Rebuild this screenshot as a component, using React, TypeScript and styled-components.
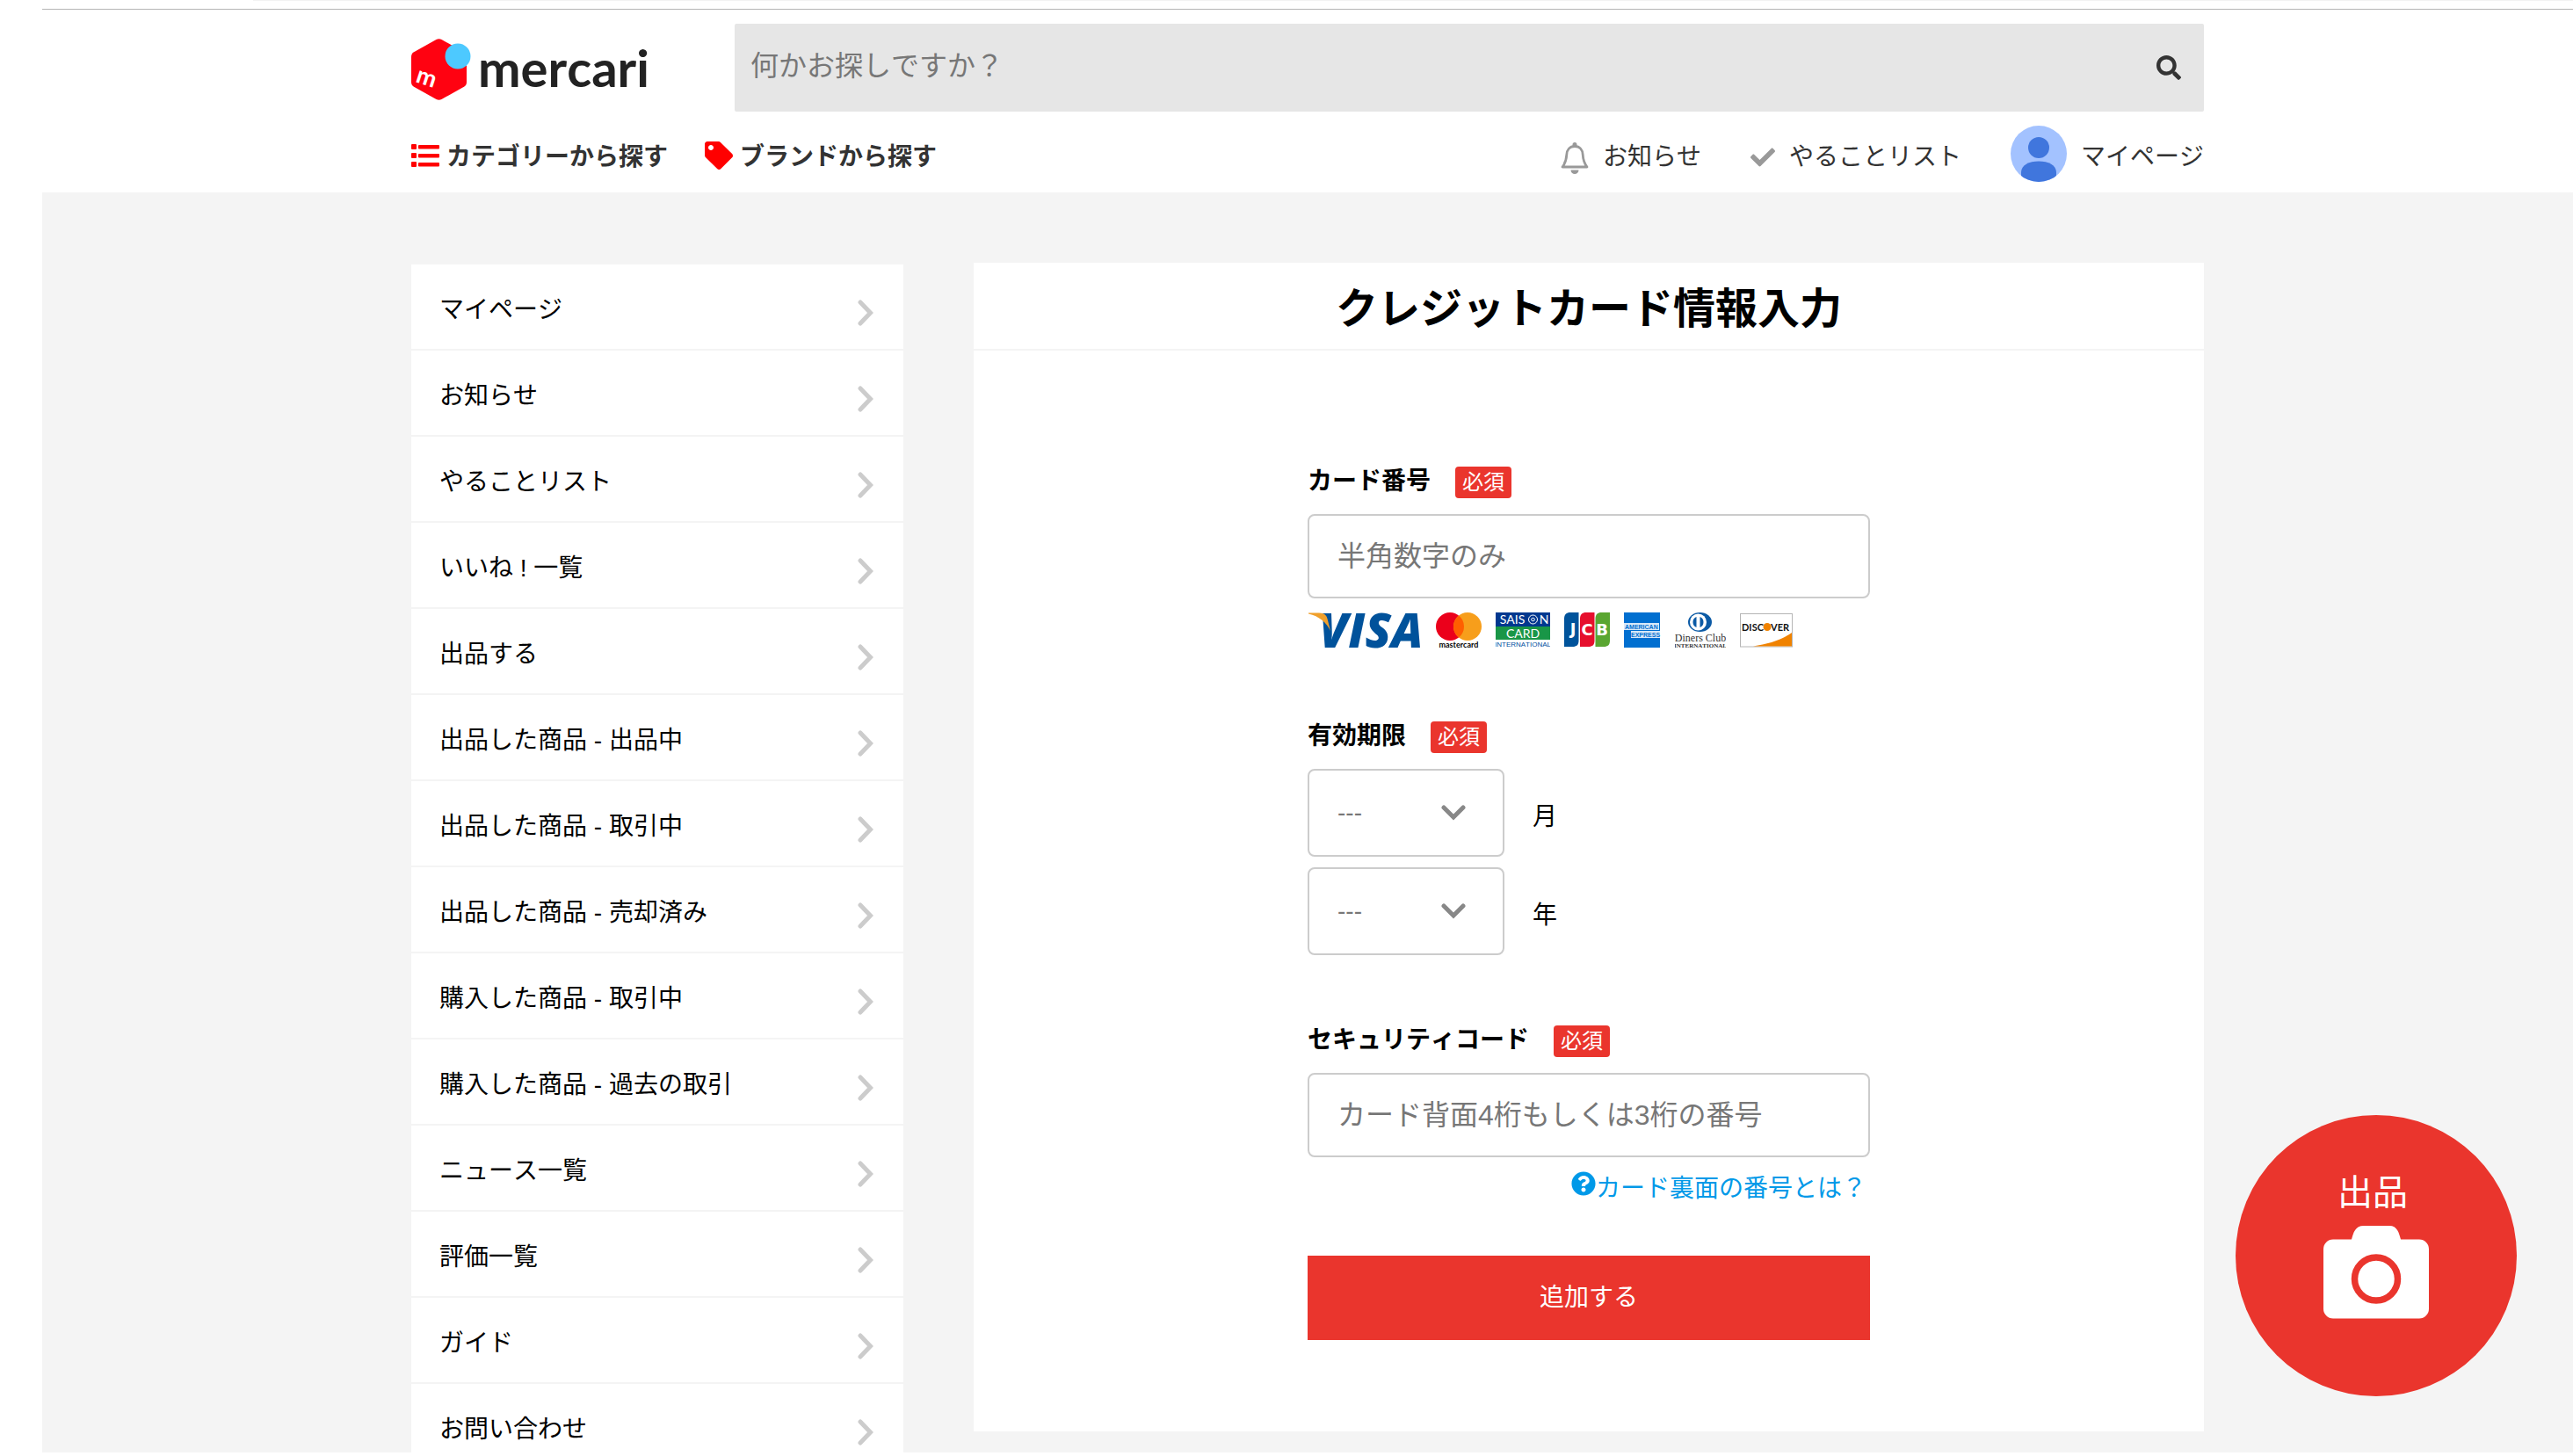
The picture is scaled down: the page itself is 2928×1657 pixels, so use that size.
import React from "react";
import styled, { createGlobalStyle } from "styled-components";
import { FaCheck, FaQuestionCircle, FaSearch, FaTag } from "react-icons/fa";

const color = {
  red: "#ea352d",
  brand: "#ff0000",
  text: "#333333",
  muted: "#777777",
  icon: "#999999",
  line: "#f4f4f4",
  border: "#cccccc",
  link: "#0099e8",
};

const GlobalStyle = createGlobalStyle`
  * { box-sizing: border-box; }
  body {
    margin: 0;
    background: #ffffff;
    color: #000000;
    font-family: "Liberation Sans", "Noto Sans CJK JP", sans-serif;
    font-size: 28px;
    line-height: 40px;
    font-kerning: none;
  }
  button, input, select { font: inherit; }
  a { color: inherit; text-decoration: none; }
  svg { display: block; flex: none; }
`;

const Pane = styled.div`
  height: calc(100vh - 4px);
  margin-left: 48px;
  overflow: hidden;
  background: ${color.line};
`;

const TopStrip = styled.div`
  height: 11px;
  background: #ffffff;
  border-bottom: 1px solid #b4b4b4;
`;

const TopStripEdge = styled.div`
  margin-left: 240px;
  border-top: 1px solid #f2f2f2;
`;

const Header = styled.header`
  padding: 16px 0 12px;
  background: #ffffff;
`;

const Container = styled.div`
  width: 100%;
  max-width: 2040px;
  margin: 0 auto;
`;

const HeaderTop = styled.div`
  display: flex;
  align-items: stretch;
`;

const Logo = styled.a`
  display: flex;
  gap: 8px;
  width: 368px;
  padding-top: 16px;
`;

const Wordmark = styled.span`
  color: #222222;
  font-family: Lato, sans-serif;
  font-size: 58px;
  font-weight: 700;
  line-height: 68px;
`;

const SearchForm = styled.form`
  display: flex;
  flex: 1;
  height: 100px;
  background: #e6e6e6;
  border-radius: 2px;
`;

const SearchInput = styled.input`
  flex: 1;
  min-width: 0;
  padding: 0 18px 4px;
  border: 0;
  background: transparent;
  font-size: 32px;
  &::placeholder { color: ${color.muted}; opacity: 1; }
`;

const SearchButton = styled.button`
  padding: 0 26px;
  border: 0;
  background: transparent;
  color: ${color.text};
`;

const HeaderNav = styled.div`
  display: flex;
  justify-content: space-between;
  margin-top: 16px;
  height: 64px;
`;

const NavGroup = styled.nav<{ $gap: number }>`
  display: flex;
  gap: ${(p) => p.$gap}px;
`;

const NavLink = styled.a<{ $bold?: boolean }>`
  display: flex;
  align-items: center;
  gap: ${(p) => (p.$bold ? 8 : 16)}px;
  color: ${color.text};
  font-weight: ${(p) => (p.$bold ? 700 : 400)};
`;

const NavLabel = styled.span`
  padding-top: 8px;
`;

const NavIcon = styled.span<{ $tint: string; $drop?: number }>`
  padding-top: ${(p) => p.$drop ?? 0}px;
  color: ${(p) => p.$tint};
`;

const Content = styled(Container)`
  display: flex;
  align-items: flex-start;
  justify-content: space-between;
  padding-top: 80px;
`;

const SideNav = styled.nav`
  width: 560px;
  margin-top: 2px;
`;

const SideList = styled.ul`
  margin: 0;
  padding: 0;
  list-style: none;
`;

const SideLink = styled.a`
  display: flex;
  align-items: center;
  justify-content: space-between;
  height: 98px;
  padding: 8px 34px 0 32px;
  background: #ffffff;
  border-bottom: 2px solid ${color.line};
`;

const ChevronBox = styled.span`
  padding-top: 6px;
`;

const Main = styled.main`
  width: 1400px;
  background: #ffffff;
`;

const Title = styled.h1`
  margin: 0;
  padding: 18px 0 10px;
  border-bottom: 2px solid ${color.line};
  font-size: 48px;
  line-height: 70px;
  text-align: center;
`;

const CardForm = styled.form`
  width: 640px;
  margin: 0 auto;
  padding: 128px 0 104px;
`;

const Field = styled.div<{ $after: number }>`
  margin-bottom: ${(p) => p.$after}px;
`;

const LabelRow = styled.div`
  display: flex;
  align-items: flex-start;
  gap: 28px;
  margin-bottom: 18px;
`;

const Label = styled.label`
  padding-top: 2px;
  line-height: 38px;
  font-weight: 700;
`;

const Badge = styled.span`
  margin-top: 4px;
  padding: 0 8px;
  border-radius: 4px;
  background: ${color.red};
  color: #ffffff;
  font-size: 24px;
  line-height: 36px;
`;

const TextInput = styled.input`
  display: block;
  width: 100%;
  height: 96px;
  padding: 0 32px;
  border: 2px solid ${color.border};
  border-radius: 8px;
  background: #ffffff;
  font-size: 32px;
  &::placeholder { color: ${color.muted}; opacity: 1; }
`;

const Brands = styled.div`
  display: flex;
  gap: 16px;
  margin-top: 16px;
`;

const SelectRow = styled.div`
  display: flex;
  align-items: center;
  gap: 32px;
  & + & { margin-top: 12px; }
`;

const SelectBox = styled.div`
  display: grid;
  width: 224px;
  align-items: center;
  & > * { grid-area: 1 / 1; }
  & > svg { justify-self: end; margin-right: 44px; pointer-events: none; }
`;

const Select = styled.select`
  width: 100%;
  height: 100px;
  padding: 0 32px;
  appearance: none;
  border: 2px solid ${color.border};
  border-radius: 8px;
  background: #ffffff;
  color: ${color.muted};
`;

const Unit = styled.label`
  padding-top: 10px;
`;

const HelpLink = styled.a`
  display: flex;
  justify-content: flex-end;
  margin-top: 16px;
  padding-right: 4px;
  color: ${color.link};
`;

const Submit = styled.button`
  display: block;
  width: 100%;
  height: 96px;
  border: 0;
  background: ${color.red};
  color: #ffffff;
`;

const SellButton = styled.a`
  position: fixed;
  right: 64px;
  bottom: 68px;
  display: flex;
  flex-direction: column;
  align-items: center;
  gap: 8px;
  width: 320px;
  height: 320px;
  padding-top: 58px;
  border-radius: 50%;
  background: ${color.red};
  color: #ffffff;
  font-size: 40px;
  line-height: 60px;
`;

const SellLabel = styled.span`
  padding-right: 8px;
`;

const LogoMark = () => (
  <svg width="68" height="72" viewBox="0 0 68 72" aria-hidden="true">
    <path
      d="M28.5 2 Q31.5 .4 34.5 2 L60 16.2 Q63 18 63 21.5 V50.5 Q63 54 60 55.8 L34.5 70 Q31.500 71.600 28.500 70 L3 55.800 Q0 54 0 50.500 V21.500 Q0 18 3 16.200Z"
      fill="#ff0211"
    />
    <circle cx="53" cy="21" r="14.500" fill="#4dc9ff" />
    <text
      x="4"
      y="50"
      transform="rotate(18 4 50)"
      fill="#fff"
      fontFamily="Lato, sans-serif"
      fontSize="27"
      fontWeight="700"
    >
      m
    </text>
  </svg>
);

const ListIcon = () => (
  <svg width="32" height="26" viewBox="0 0 32 26" fill="currentColor" aria-hidden="true">
    {[0, 10, 20].map((y) => (
      <g key={y}>
        <rect x="0" y={y} width="6" height="6" rx="1" />
        <rect x="8" y={y + 1} width="24" height="4.500" rx="1" />
      </g>
    ))}
  </svg>
);

const BellIcon = () => (
  <svg width="32" height="36" viewBox="0 0 32 36" aria-hidden="true">
    <path
      d="M16 4.500 C10 4.500 7 9 6.800 14 C6.500 20 5.500 23.500 2 28 H30 C26.500 23.500 25.500 20 25.200 14 C25 9 22 4.500 16 4.500Z"
      fill="none"
      stroke="currentColor"
      strokeWidth="2.800"
      strokeLinejoin="round"
    />
    <path d="M13.500 5 V2.500 a2.500 2.500 0 0 1 5 0 V5Z M11.500 31.500 H20.500 A4.500 4.500 0 0 1 11.500 31.500Z" fill="currentColor" />
  </svg>
);

const Avatar = () => (
  <svg width="64" height="64" viewBox="0 0 64 64" aria-hidden="true">
    <clipPath id="avatar-clip">
      <circle cx="32" cy="32" r="32" />
    </clipPath>
    <circle cx="32" cy="32" r="32" fill="#a3c2ff" />
    <g clipPath="url(#avatar-clip)" fill="#4076dd">
      <circle cx="32" cy="25" r="12" />
      <path d="M12 64 V53 C12 45 21 40.500 32 40.500 S52 45 52 53 V64Z" />
    </g>
  </svg>
);

const ChevronRight = () => (
  <svg width="18" height="30" viewBox="0 0 18 30" aria-hidden="true">
    <path d="M3 3 L14.500 15 L3 27" fill="none" stroke="#cccccc" strokeWidth="5" strokeLinecap="round" />
  </svg>
);

const ChevronDown = () => (
  <svg width="28" height="18" viewBox="0 0 28 18" aria-hidden="true">
    <path d="M3 3 L14 14 L25 3" fill="none" stroke="#888888" strokeWidth="5" strokeLinecap="round" />
  </svg>
);

const CameraIcon = () => (
  <svg width="120" height="106" viewBox="0 0 120 106" aria-hidden="true">
    <path
      d="M11 15.500 H32 C34 8 36 0 46 0 H75 C84 0 86 8 88 15.500 H109 A11 11 0 0 1 120 26.500 V94.500 A11 11 0 0 1 109 105.500 H11 A11 11 0 0 1 0 94.500 V26.500 A11 11 0 0 1 11 15.500Z"
      fill="#fff"
    />
    <circle cx="60" cy="60.500" r="24.500" fill="none" stroke={color.red} strokeWidth="7.500" />
  </svg>
);

const Visa = () => (
  <svg width="130" height="40" viewBox="0 0 130 40" overflow="visible" role="img" aria-label="VISA">
    <text x="13" y="39.500" fill="#00529b" fontFamily="Open Sans, sans-serif" fontSize="54" fontWeight="800" fontStyle="italic">
      VISA
    </text>
    <path d="M1 .5 H13 C20 .5 22 4 23 9 L26 21 C22 12 13 4 1 1.500Z" fill="#f0a02c" />
  </svg>
);

const Mastercard = () => (
  <svg width="52" height="40" viewBox="0 0 52 40" role="img" aria-label="mastercard">
    <circle cx="16" cy="16" r="16" fill="#eb001b" />
    <circle cx="36" cy="16" r="16" fill="#f79e1b" />
    <path d="M26 3.500 A16 16 0 0 1 26 28.500 A16 16 0 0 1 26 3.500Z" fill="#ff5f00" />
    <text x="26" y="39.500" textAnchor="middle" fill="#000" fontFamily="Lato, sans-serif" fontSize="9" fontWeight="700">
      mastercard
    </text>
  </svg>
);

const Saison = () => (
  <svg width="62" height="40" viewBox="0 0 62 40" role="img" aria-label="SAISON CARD INTERNATIONAL">
    <rect width="62" height="16" fill="#00388f" />
    <rect y="16" width="62" height="15" fill="#199647" />
    <g fill="#fff" fontFamily="Lato, sans-serif" fontSize="14" textAnchor="middle">
      <text x="19" y="13">SAIS</text>
      <text x="55" y="13">N</text>
      <text x="31" y="28.500">CARD</text>
    </g>
    <circle cx="42.500" cy="8" r="5" fill="none" stroke="#fff" />
    <circle cx="42.500" cy="8" r="1.800" fill="none" stroke="#fff" />
    <text x="31" y="39" textAnchor="middle" fill="#0050a0" fontFamily="Liberation Sans, sans-serif" fontSize="8">
      INTERNATIONAL
    </text>
  </svg>
);

const Jcb = () => (
  <svg width="52" height="40" viewBox="0 0 52 40" role="img" aria-label="JCB">
    {[
      ["#00539b", 0],
      ["#e60f2d", 18],
      ["#5aa631", 35.5],
    ].map(([fill, x]) => (
      <path
        key={x}
        transform={`translate(${x} 0)`}
        d="M7 0 H16.500 V32 C16.500 37 14 39 9.500 39 H0 V7 C0 2.500 2.500 0 7 0Z"
        fill={String(fill)}
      />
    ))}
    <g fill="#fff" fontFamily="DejaVu Sans, sans-serif" fontSize="18" fontWeight="700" textAnchor="middle">
      <text x="10" y="25">J</text>
      <text x="26" y="26">C</text>
      <text x="43" y="26">B</text>
    </g>
  </svg>
);

const Amex = () => (
  <svg width="42" height="40" viewBox="0 0 42 40" role="img" aria-label="AMERICAN EXPRESS">
    <rect width="41" height="40" fill="#016fd0" />
    <rect x="0" y="12" width="40" height="8" fill="#d7e8f8" />
    <rect x="8" y="21" width="33" height="8" fill="#d7e8f8" />
    <g fill="#016fd0" fontFamily="Liberation Sans, sans-serif" fontSize="7" fontWeight="700">
      <text x="1" y="18.500">AMERICAN</text>
      <text x="8" y="27.500">EXPRESS</text>
    </g>
  </svg>
);

const Diners = () => (
  <svg width="58" height="40" viewBox="0 0 58 40" role="img" aria-label="Diners Club INTERNATIONAL">
    <ellipse cx="28.500" cy="11" rx="13.500" ry="11" fill="#0b5aa5" />
    <circle cx="26.500" cy="11" r="9.500" fill="#fff" />
    <path d="M24.500 5 A6.500 6.500 0 0 0 24.500 17Z M28.500 5 A6.500 6.500 0 0 1 28.500 17Z" fill="#0b5aa5" />
    <g fill="#333" fontFamily="Liberation Serif, serif" textAnchor="middle">
      <text x="29" y="32.500" fontSize="12">Diners Club</text>
      <text x="29" y="39.500" fontSize="7" fontWeight="700">INTERNATIONAL</text>
    </g>
  </svg>
);

const Discover = () => (
  <svg width="60" height="40" viewBox="0 0 60 40" role="img" aria-label="DISCOVER">
    <rect x=".5" y="1.500" width="59" height="37.500" fill="#fff" stroke="#b5b5b5" />
    <path d="M59 23 V38.500 H15 C32 36 48 31 59 23Z" fill="#f08200" />
    <circle cx="31" cy="16.500" r="4.500" fill="#f08200" />
    <g fill="#111" fontFamily="Lato, sans-serif" fontSize="11" fontWeight="700">
      <text x="2" y="20.500">DISC</text>
      <text x="35" y="20.500">VER</text>
    </g>
  </svg>
);

const sideItems = [
  "マイページ",
  "お知らせ",
  "やることリスト",
  "いいね ! 一覧",
  "出品する",
  "出品した商品 - 出品中",
  "出品した商品 - 取引中",
  "出品した商品 - 売却済み",
  "購入した商品 - 取引中",
  "購入した商品 - 過去の取引",
  "ニュース一覧",
  "評価一覧",
  "ガイド",
  "お問い合わせ",
];

const months = Array.from({ length: 12 }, (_, i) => String(i + 1));
const years = Array.from({ length: 11 }, (_, i) => String(19 + i));

const ExpirySelect = ({ id, unit, options }: { id: string; unit: string; options: string[] }) => (
  <SelectRow>
    <SelectBox>
      <Select id={id} defaultValue="">
        <option value="">---</option>
        {options.map((o) => (
          <option key={o}>{o}</option>
        ))}
      </Select>
      <ChevronDown />
    </SelectBox>
    <Unit htmlFor={id}>{unit}</Unit>
  </SelectRow>
);

const FieldLabel = ({ id, children }: { id: string; children: React.ReactNode }) => (
  <LabelRow>
    <Label htmlFor={id}>{children}</Label>
    <Badge>必須</Badge>
  </LabelRow>
);

export default function App() {
  return (
    <>
      <GlobalStyle />
      <Pane>
        <TopStrip>
          <TopStripEdge />
        </TopStrip>
        <Header>
          <Container>
            <HeaderTop>
              <Logo href="#">
                <LogoMark />
                <Wordmark>mercari</Wordmark>
              </Logo>
              <SearchForm role="search">
                <SearchInput type="text" aria-label="検索" placeholder="何かお探しですか？" />
                <SearchButton type="button" aria-label="検索する">
                  <FaSearch size={28} />
                </SearchButton>
              </SearchForm>
            </HeaderTop>
            <HeaderNav>
              <NavGroup $gap={42}>
                <NavLink href="#" $bold>
                  <NavIcon $tint={color.brand} $drop={4}>
                    <ListIcon />
                  </NavIcon>
                  <NavLabel>カテゴリーから探す</NavLabel>
                </NavLink>
                <NavLink href="#" $bold>
                  <NavIcon $tint={color.brand} $drop={4}>
                    <FaTag size={32} />
                  </NavIcon>
                  <NavLabel>ブランドから探す</NavLabel>
                </NavLink>
              </NavGroup>
              <NavGroup $gap={56}>
                <NavLink href="#">
                  <NavIcon $tint={color.icon} $drop={10}>
                    <BellIcon />
                  </NavIcon>
                  <NavLabel>お知らせ</NavLabel>
                </NavLink>
                <NavLink href="#">
                  <NavIcon $tint={color.icon} $drop={8}>
                    <FaCheck size={28} />
                  </NavIcon>
                  <NavLabel>やることリスト</NavLabel>
                </NavLink>
                <NavLink href="#">
                  <Avatar />
                  <NavLabel>マイページ</NavLabel>
                </NavLink>
              </NavGroup>
            </HeaderNav>
          </Container>
        </Header>
        <Content>
          <SideNav>
            <SideList>
              {sideItems.map((item) => (
                <li key={item}>
                  <SideLink href="#">
                    {item}
                    <ChevronBox>
                      <ChevronRight />
                    </ChevronBox>
                  </SideLink>
                </li>
              ))}
            </SideList>
          </SideNav>
          <Main>
            <Title>クレジットカード情報入力</Title>
            <CardForm>
              <Field $after={80}>
                <FieldLabel id="card-number">カード番号</FieldLabel>
                <TextInput id="card-number" type="text" placeholder="半角数字のみ" />
                <Brands>
                  <Visa />
                  <Mastercard />
                  <Saison />
                  <Jcb />
                  <Amex />
                  <Diners />
                  <Discover />
                </Brands>
              </Field>
              <Field $after={76}>
                <FieldLabel id="expiry-month">有効期限</FieldLabel>
                <ExpirySelect id="expiry-month" unit="月" options={months} />
                <ExpirySelect id="expiry-year" unit="年" options={years} />
              </Field>
              <Field $after={56}>
                <FieldLabel id="security-code">セキュリティコード</FieldLabel>
                <TextInput id="security-code" type="text" placeholder="カード背面4桁もしくは3桁の番号" />
                <HelpLink href="#">
                  <FaQuestionCircle size={28} />
                  カード裏面の番号とは？
                </HelpLink>
              </Field>
              <Submit type="button">追加する</Submit>
            </CardForm>
          </Main>
        </Content>
      </Pane>
      <SellButton href="#">
        <SellLabel>出品</SellLabel>
        <CameraIcon />
      </SellButton>
    </>
  );
}
